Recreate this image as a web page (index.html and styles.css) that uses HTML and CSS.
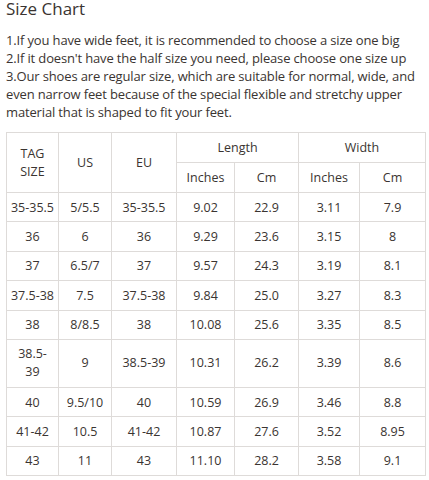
FILE: index.html
```html
<!DOCTYPE html>
<html>
<head>
<meta charset="utf-8">
<link rel="stylesheet" href="styles.css">
</head>
<body>
<div class="page">
  <h2 class="title">Size Chart</h2>
  <div class="notes">
    <p>1.If you have wide feet, it is recommended to choose a size one big</p>
    <p>2.If it doesn't have the half size you need, please choose one size up</p>
    <p>3.Our shoes are regular size, which are suitable for normal, wide, and even narrow feet because of the special flexible and stretchy upper material that is shaped to fit your feet.</p>
  </div>
  <table class="chart">
    <colgroup>
      <col class="c1"><col class="c2"><col class="c3"><col class="c4"><col class="c5"><col class="c6"><col class="c7">
    </colgroup>
    <thead>
      <tr class="hrow">
        <th rowspan="2">TAG<br>SIZE</th>
        <th rowspan="2">US</th>
        <th rowspan="2">EU</th>
        <th colspan="2">Length</th>
        <th colspan="2">Width</th>
      </tr>
      <tr class="hrow">
        <th>Inches</th><th>Cm</th><th>Inches</th><th>Cm</th>
      </tr>
    </thead>
    <tbody>
      <tr><td>35-35.5</td><td>5/5.5</td><td>35-35.5</td><td>9.02</td><td>22.9</td><td>3.11</td><td>7.9</td></tr>
      <tr><td>36</td><td>6</td><td>36</td><td>9.29</td><td>23.6</td><td>3.15</td><td>8</td></tr>
      <tr><td>37</td><td>6.5/7</td><td>37</td><td>9.57</td><td>24.3</td><td>3.19</td><td>8.1</td></tr>
      <tr><td>37.5-38</td><td>7.5</td><td>37.5-38</td><td>9.84</td><td>25.0</td><td>3.27</td><td>8.3</td></tr>
      <tr><td>38</td><td>8/8.5</td><td>38</td><td>10.08</td><td>25.6</td><td>3.35</td><td>8.5</td></tr>
      <tr class="tall"><td>38.5-<br>39</td><td>9</td><td>38.5-39</td><td>10.31</td><td>26.2</td><td>3.39</td><td>8.6</td></tr>
      <tr><td>40</td><td>9.5/10</td><td>40</td><td>10.59</td><td>26.9</td><td>3.46</td><td>8.8</td></tr>
      <tr><td>41-42</td><td>10.5</td><td>41-42</td><td>10.87</td><td>27.6</td><td>3.52</td><td>8.95</td></tr>
      <tr><td>43</td><td>11</td><td>43</td><td>11.10</td><td>28.2</td><td>3.58</td><td>9.1</td></tr>
    </tbody>
  </table>
</div>
</body>
</html>
```

FILE: styles.css
```css
html, body {
  margin: 0;
  padding: 0;
  background: #fff;
}
.page {
  padding: 0 4px 0 6px;
  font-family: "Open Sans", "DejaVu Sans", sans-serif;
  color: #3a3431;
}
.title {
  margin: 0;
  font-size: 17px;
  font-weight: 400;
  line-height: 17px;
}
.notes {
  margin-top: 14px;
  font-size: 13px;
  line-height: 18px;
  letter-spacing: -0.15px;
}
.notes p {
  margin: 0;
}
.chart {
  margin-top: 11px;
  width: 419px;
  border-collapse: collapse;
  table-layout: fixed;
  font-size: 12.5px;
  text-align: center;
}
.c1 { width: 52px; }
.c2 { width: 53px; }
.c3 { width: 65px; }
.c4 { width: 58px; }
.c5 { width: 64px; }
.c6 { width: 61px; }
.c7 { width: 66px; }
.chart th, .chart td {
  border: 1px solid #dedbd9;
  padding: 0;
  font-weight: 400;
  height: 28.4px;
  line-height: 17px;
  vertical-align: middle;
}
.chart th {
  height: 29px;
  line-height: 18px;
}
.chart .tall td {
  height: 47px;
  line-height: 18px;
}
```
